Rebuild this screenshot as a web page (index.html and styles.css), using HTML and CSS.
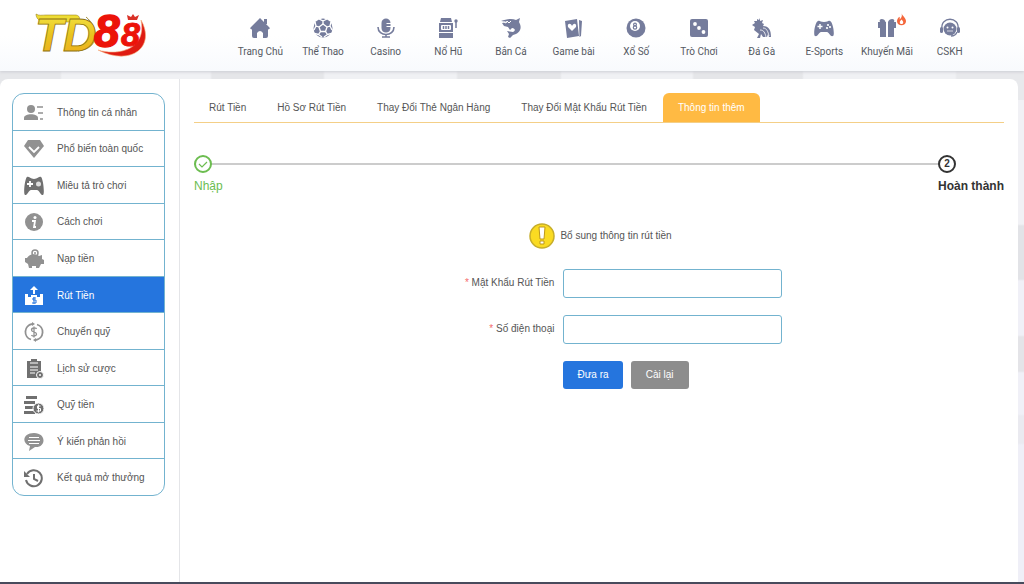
FILE: index.html
```html
<!DOCTYPE html>
<html lang="vi">
<head>
<meta charset="utf-8">
<meta name="viewport" content="width=device-width, initial-scale=1">
<title>TD88 - Rút Tiền</title>
<link rel="stylesheet" href="styles.css">
</head>
<body>
<header class="header">
  <a class="logo" href="#" aria-label="TD88">
    <svg width="116" height="50" viewBox="0 0 116 50">
      <defs>
        <linearGradient id="gold" x1="0" y1="0" x2="0" y2="1"><stop offset="0" stop-color="#f6e94a"/><stop offset=".5" stop-color="#e8c41f"/><stop offset="1" stop-color="#f0a81c"/></linearGradient>
      </defs>
      <path d="M2 6C5 8 8 7 12 7H42C47 8 46 12 43 14H12C6 14 2 11 2 6Z" fill="#eedc35" stroke="#8f7413" stroke-width=".5"/>
      <path d="M52 9C64 19 62 36 44 43 66 41 66 20 52 9Z" fill="#e2c127" stroke="#8f7413" stroke-width=".5"/>
      <path d="M64 42C84 48 113 42 107 12 122 38 98 59 64 42Z" fill="#df1b12" stroke="#f7b27e" stroke-width=".6"/>
      <path d="M94 12 93 7l4 2 2-3 2 3 4-2-2 5Z" fill="#d93127"/>
      <text class="logo-gold" x="1" y="43" fill="url(#gold)" stroke="#8f7413" stroke-width=".8">TD</text>
      <text class="logo-red" x="60" y="39">8</text>
      <text class="logo-red small" x="87" y="38">8</text>
    </svg>
  </a>
  <nav class="nav">
    <a href="#"><svg viewBox="0 0 20 20"><path d="M10 0 19 9q2 2-1 2.500V18q0 2-2 2h-3v-5q-3-4-6 0v5H4q-2 0-2-2v-6.500Q-1 11 1 9Z"/><path d="M14 1h3v5h-3Z"/></svg>Trang Chủ</a>
    <a href="#"><svg viewBox="0 0 20 20"><circle cx="10" cy="10" r="9.500"/><g fill="none" stroke="#fff" stroke-width="1.300"><path d="m10 6 4 3-1.500 4.500h-5L6 9Z"/><path d="M10 6V3L6 1M10 3l4-2M14 9l3-1 1-4M17 8l2 4M12.500 13.500l2 3 4-1M14.500 16.500 11 19M7.500 13.500l-2 3-4-1M5.500 16.500 9 19M6 9 3 8 2 4M3 8l-2 4"/></g></svg>Thể Thao</a>
    <a href="#"><svg viewBox="0 0 20 20"><path d="M5.500 5c0-6 9-6 9 0h-4v1h4v2h-4v1h4v1c0 6-9 6-9 0Z"/><path d="M2 9c0 10 16 10 16 0M10 16v3M6 19h8" fill="none" stroke="currentColor" stroke-width="1.600"/></svg>Casino</a>
    <a href="#"><svg viewBox="0 0 20 20"><path d="M3 0h10l1 4H2ZM1 5h14v9H1ZM1 15h14v5H1Z"/><rect x="3" y="7" width="10" height="5" rx="1" fill="#fff"/><path d="M5.500 8v3M8 8v3M10.500 8v3M18 4v6" fill="none" stroke="currentColor" stroke-width="1.500"/><circle cx="18" cy="3" r="1.700"/></svg>Nổ Hũ</a>
    <a href="#"><svg viewBox="0 0 20 20"><path d="M0 3C5 1 11 0 15 2l4-2-1 4c4 7 0 12-6 13l-3 3-2-1 1-3-2-3 6 1c3-1 2-4-1-4l-2 2-2-3-4-1-2-3 6-1Z"/><path d="m3 4 2 1 1-2 2 2 2-2" fill="none" stroke="#fff"/></svg>Bắn Cá</a>
    <a href="#"><svg viewBox="0 0 20 20"><path d="m1 3 12-2 2 17-12 2ZM15 2l3 1-1 15-1.500 1Z"/><path d="M8 13 4 9c-1-4 3-4 4-1 2-4 5-2 4 1Z" fill="#fff"/></svg>Game bài</a>
    <a href="#"><svg viewBox="0 0 20 20"><circle cx="10" cy="10" r="9.500"/><circle cx="9" cy="8" r="5" fill="#fff"/><g fill="none" stroke="currentColor" stroke-width="1.200"><circle cx="9" cy="6.500" r="1.400"/><circle cx="9" cy="9.500" r="1.700"/></g></svg>Xổ Số</a>
    <a href="#"><svg viewBox="0 0 20 20"><rect x="1" y="1" width="18" height="18" rx="2"/><g fill="#fff"><circle cx="6" cy="6" r="1.900"/><circle cx="10" cy="10" r="1.900"/><circle cx="14.500" cy="14" r="1.900"/></g></svg>Trò Chơi</a>
    <a href="#"><svg viewBox="0 0 20 20"><path d="m8 0 0 3 3-1-1 3 2 1-1 2c6 0 8 4 8 11h-2l-1-3-1 3h-4l-2-3-1 4H5l2-4-5-4 1-3-3-2 3-2-1-2 3 0 0-2 2 1Z"/><path d="M11 10c4 0 5 4 6 8M8 12c4 0 5 3 6 7" stroke="#fff" fill="none" stroke-width=".8"/></svg>Đá Gà</a>
    <a href="#"><svg viewBox="0 0 20 20"><path d="M4 3c2-1 2 1 6 1s4-2 6-1c3 1 5 14 3 15-3 1-4-4-6-4H7c-2 0-3 5-6 4C-1 17 1 4 4 3Z"/><path d="M6 6v5M3.500 8.500h5" stroke="#fff" stroke-width="1.500"/><g fill="#fff"><circle cx="14" cy="7" r="1.100"/><circle cx="16" cy="9" r="1.100"/><circle cx="13" cy="10" r="1.100"/></g></svg>E-Sports</a>
    <a href="#"><svg viewBox="0 0 20 20"><path d="M3 4C1 0 8 0 8.500 4H9v15H3v-9H1V4ZM11 4c1-4 8-4 6 0h2v6h-2v9h-6Z"/></svg><svg class="flame" viewBox="0 0 10 14"><path d="M5 0c1 3 5 5 5 9 0 6-10 6-10 0 0-2 1-4 3-5l0 3c2-2 3-4 2-7Z" fill="#f4673c"/><path d="M5 7c3 3 2 5 0 5s-3-2 0-5Z" fill="#fff"/></svg>Khuyến Mãi</a>
    <a href="#"><svg viewBox="0 0 20 20"><circle cx="10" cy="11" r="6.500"/><path d="M2 11C0-2 20-2 18 11M17 14c-1 3-3 4-6 4" fill="none" stroke="currentColor" stroke-width="1.300"/><rect x="0" y="9" width="3" height="6" rx="1.500"/><rect x="17" y="9" width="3" height="6" rx="1.500"/><g fill="#fff"><circle cx="7.500" cy="9.500" r="1"/><circle cx="12.500" cy="9.500" r="1"/></g><path d="M7 13h6" fill="none" stroke="#fff" stroke-width=".7"/></svg>CSKH</a>
  </nav>
</header>

<div class="panel">
  <aside class="sidebar">
    <nav class="menu">
      <a href="#"><svg viewBox="0 0 20 20"><circle cx="7" cy="6" r="4"/><path d="M0 17v-2c0-5 14-5 14 0v2Z"/><path d="M13 4h6M14 10h5M16 16h3" stroke="currentColor" stroke-width="1.500"/></svg>Thông tin cá nhân</a>
      <a href="#"><svg viewBox="0 0 20 20"><path d="M4 1h12l4 6-10 12L0 7Z"/><path d="m5 8 5 5 5-5" fill="none" stroke="#fff" stroke-width="1.800"/></svg>Phổ biến toàn quốc</a>
      <a href="#" class="dark"><svg viewBox="0 0 20 20"><path d="M3 1c2-1 3 2 7 2s5-3 7-2c2 1 4 17 2 18-2 1-4-5-6-5H7c-2 0-4 6-6 5C-1 18 1 2 3 1Z"/><path d="M6 5v6M3 8h6" stroke="#fff" stroke-width="1.800"/><circle cx="14.500" cy="8" r="2.500" fill="#ddd"/></svg>Miêu tả trò chơi</a>
      <a href="#"><svg viewBox="0 0 20 20"><circle cx="10" cy="10" r="9"/><circle cx="11" cy="5.500" r="1.500" fill="#fff"/><path d="M8 9h3l-1 6h2" fill="none" stroke="#fff" stroke-width="1.800"/></svg>Cách chơi</a>
      <a href="#"><svg viewBox="0 0 20 20"><path d="M1 9h2c2-4 8-5 12-2l3-1v4l2 1v4h-3l-2 4h-3v-2H8v2H5l-1-4-3-2Z"/><circle cx="11" cy="4" r="3" fill="none" stroke="currentColor" stroke-width="1.500"/><circle cx="11" cy="4" r="1"/></svg>Nạp tiền</a>
      <a href="#" class="active"><svg viewBox="0 0 20 20"><path d="M1 8h3v3h3V9h6v2h3V8h3v11H1ZM10 0l4 4h-3v4H9V4H6Z"/><path d="M12 12H9v2h3v3H8M10 11v7" stroke="#2575de" fill="none"/></svg>Rút Tiền</a>
      <a href="#"><svg viewBox="0 0 20 20"><path d="M8 2a8 8 0 0 0-1 15.500M12 18a8 8 0 0 0 1-15.500" fill="none" stroke="currentColor" stroke-width="1.800"/><path d="M12.500 7C12 5.500 7.500 5.500 7.500 8s5 1.500 5 4-4.500 2.500-5 1M10 4.500v11" fill="none" stroke="currentColor" stroke-width="1.300"/><path d="m8 0 3 2-3 2ZM12 16v4l-3-2Z"/></svg>Chuyển quỹ</a>
      <a href="#" class="dark"><svg viewBox="0 0 20 20"><path d="M3 2h4V0h6v2h4v17H3Z"/><path d="M6 4h8M6 8h8M6 11h8M6 14h5" stroke="#fff" stroke-width="1.200"/><circle cx="16" cy="16" r="3.500" stroke="#fff"/><circle cx="16" cy="16" r="1" fill="#fff"/></svg>Lịch sử cược</a>
      <a href="#" class="dark"><svg viewBox="0 0 20 20"><path d="M2 1h11v3H2ZM0 6h11v3H0ZM1 11h9v3H1ZM0 16h11v3H0Z"/><circle cx="14.500" cy="13.500" r="5.500" stroke="#fff"/><path d="M16.500 11h-3v2.500h3V16h-4M14.500 9.500v8" fill="none" stroke="#fff"/></svg>Quỹ tiền</a>
      <a href="#"><svg viewBox="0 0 20 20"><path d="M10 1c13 0 12 15 1 14l-6 4 1-5C-3 11-1 1 10 1Z"/><path d="M5 5.500h10M4 8.500h12M5 11.500h10" stroke="#fff" stroke-width="1.100"/></svg>Ý kiến phản hồi</a>
      <a href="#" class="dark"><svg viewBox="0 0 20 20"><path d="M3 6a8 8 0 1 1-1 6M10 6v5l4 2" fill="none" stroke="currentColor" stroke-width="2"/><path d="M0 3v6h6Z"/></svg>Kết quả mở thưởng</a>
    </nav>
  </aside>

  <main class="content">
    <nav class="tabs">
      <a href="#">Rút Tiền</a>
      <a href="#">Hồ Sơ Rút Tiền</a>
      <a href="#">Thay Đổi Thẻ Ngân Hàng</a>
      <a href="#">Thay Đổi Mật Khẩu Rút Tiền</a>
      <a href="#" class="active">Thông tin thêm</a>
    </nav>
    <ol class="steps">
      <li class="done"><span class="mark"><svg viewBox="0 0 12 12"><path d="m2 6 3 3 5-5" fill="none" stroke="currentColor" stroke-width="1.200"/></svg></span><span>Nhập</span></li>
      <li class="current"><span class="mark">2</span><span>Hoàn thành</span></li>
    </ol>
    <p class="notice"><svg viewBox="0 0 26 26"><circle cx="13" cy="13" r="12" fill="#fadb22" stroke="#c6ad2b" stroke-width="1.500"/><path d="M10 4h6l-1 12h-4ZM11 18h4v3h-4Z" fill="#fff" stroke="#bd981b"/></svg>Bổ sung thông tin rút tiền</p>
    <form class="form">
      <label for="password"><span class="required">*</span> Mật Khẩu Rút Tiền</label>
      <input id="password" type="password">
      <label for="phone"><span class="required">*</span> Số điện thoại</label>
      <input id="phone" type="tel">
      <div class="actions">
        <button type="submit" class="primary">Đưa ra</button>
        <button type="reset">Cài lại</button>
      </div>
    </form>
  </main>
</div>
<footer class="footer"></footer>
</body>
</html>
```
FILE: styles.css
```css
* {
  box-sizing: border-box;
}

body {
  display: flex;
  flex-direction: column;
  min-height: 100vh;
  margin: 0;
  background:
    linear-gradient(90deg, #e6e7ea 60px, #f0f1f4 62px 210px, #e5e6e9 212px 323px, #f0f1f4 325px 456px, #e5e6e9 458px 560px, #f0f1f4 562px 692px, #e5e6e9 694px 802px, #f0f1f4 804px 955px, #e8e9ec 957px) top / 100% 100px no-repeat,
    linear-gradient(#f1f1f5 224px, #e2e3e7 226px 279px, #f0f0f7 281px 335px, #e4e4e8 337px 371px, #f0f0f7 373px 414px, #eaeaf0 416px 443px, #efeff7 445px);
  color: #555;
  font: 10px/16px "Liberation Sans", Arial, sans-serif;
}

a {
  color: inherit;
  text-decoration: none;
}

svg {
  display: block;
  flex: none;
  fill: currentColor;
}

.header {
  display: flex;
  align-items: flex-start;
  height: 71px;
  padding: 0 43px 0 34px;
  background: linear-gradient(#fff, #fff 50%, #f8fafd);
  box-shadow: 0 1px 3px #ccced4;
}

.logo {
  flex: none;
  width: 195px;
  padding-top: 8px;
}

.logo-gold {
  font: italic bold 46px "Liberation Sans", sans-serif;
}

.logo-red {
  fill: #ec1309;
  stroke: #ec1309;
  stroke-width: 1.5px;
  font: italic bold 46px "Liberation Sans", sans-serif;
}

.logo-red.small {
  stroke-width: 1px;
  font-size: 34px;
}

.nav {
  display: grid;
  flex: 1;
  grid-template-columns: repeat(12, minmax(0, 1fr));
  padding-top: 18px;
  color: #555962;
  font-family: Roboto, sans-serif;
  white-space: nowrap;
}

.nav a {
  position: relative;
  display: flex;
  flex-direction: column;
  align-items: center;
  gap: 6px;
}

.nav svg {
  width: 20px;
  height: 20px;
  color: #757c9c;
}

.nav .flame {
  position: absolute;
  top: -5px;
  right: 12px;
  width: 9px;
  height: 13px;
}

.panel {
  display: flex;
  flex: 1;
  margin: 8px 6px 0 0;
  border-radius: 8px 8px 0 0;
  background: #fff;
}

.sidebar {
  flex: none;
  width: 180px;
  padding: 14px 14px 16px 12px;
  border-right: 1px solid #e4e5e8;
}

.menu {
  display: flex;
  flex-direction: column;
  min-height: 403px;
  border: 1px solid #73b3cf;
  border-radius: 12px;
  overflow: hidden;
}

.menu a {
  display: flex;
  flex: 1;
  align-items: center;
  gap: 13px;
  padding: 2px 11px 0;
  border-top: 1px solid #73b3cf;
  white-space: nowrap;
}

.menu a:first-child {
  border-top: 0;
}

.menu svg {
  width: 20px;
  height: 20px;
  color: #919191;
}

.menu .dark svg {
  color: #707070;
}

.menu .active,
.menu .active svg {
  color: #fff;
}

.menu .active {
  background: #2575de;
}

.content {
  flex: 1;
  min-width: 0;
  padding: 14px 14px 16px;
}

.tabs {
  display: flex;
  gap: 1px;
  border-bottom: 1px solid #f4cf87;
}

.tabs a {
  padding: 7px 15px 6px;
  border-radius: 6px 6px 0 0;
}

.tabs .active {
  background: #ffba43;
  color: #fff;
}

.steps {
  display: flex;
  justify-content: space-between;
  margin: 32px 0 0;
  padding: 0;
  background: linear-gradient(#ccc, #ccc) 0 8px / calc(100% - 50px) 2px no-repeat;
  font-size: 12px;
  list-style: none;
}

.steps li {
  display: flex;
  flex-direction: column;
  align-items: flex-start;
  gap: 5px;
}

.mark {
  display: flex;
  align-items: center;
  justify-content: center;
  width: 18px;
  height: 18px;
  border: 2px solid;
  border-radius: 50%;
  background: #fff;
  font-size: 10px;
}

.mark svg {
  width: 12px;
  height: 12px;
}

.done {
  color: #6cbd50;
}

.current {
  color: #333;
  font-weight: bold;
}

.notice {
  display: flex;
  align-items: center;
  justify-content: center;
  gap: 5px;
  margin: 29px 0 20px;
  padding-left: 3px;
}

.notice svg {
  width: 26px;
  height: 26px;
}

.form {
  display: grid;
  grid-template-columns: 45fr 55fr;
  gap: 17px 9px;
}

.form label {
  padding-top: 6px;
  text-align: right;
}

.required {
  color: #f56c6c;
}

.form input {
  width: 100%;
  max-width: 219px;
  height: 29px;
  padding: 0 10px;
  border: 1px solid #73b3cf;
  border-radius: 3px;
  background: #fff;
  font: inherit;
}

.actions {
  display: flex;
  grid-column: 2;
  gap: 8px;
}

.actions button {
  min-width: 58px;
  padding: 6px 14px;
  border: 0;
  border-radius: 3px;
  background: #8d8d8d;
  color: #fff;
  font: inherit;
}

.actions .primary {
  background: #2575de;
}

.footer {
  height: 2px;
  background: #484b5c;
}
```
